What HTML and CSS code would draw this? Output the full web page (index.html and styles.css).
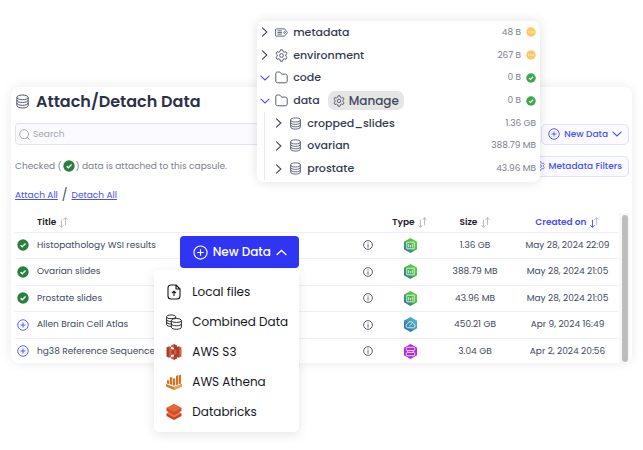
FILE: index.html
```html
<!DOCTYPE html>
<html lang="en">
<head>
    <meta charset="UTF-8">
    <meta name="viewport" content="width=device-width, initial-scale=1.0">
    <link rel="stylesheet" href="styles.css">
    <title>Attach/Detach Data</title>
</head>
<body>
    <!-- Shared icons -->
    <svg class="sprite" aria-hidden="true">
        <defs>
            <linearGradient id="green" x1="1" y1="0" x2="0" y2="1">
                <stop offset="0.3" stop-color="#5cc83c"/>
                <stop offset="1" stop-color="#2566a8"/>
            </linearGradient>
            <linearGradient id="blue" x1="1" y1="0" x2="0" y2="1">
                <stop offset="0" stop-color="#5cc6cc"/>
                <stop offset="1" stop-color="#25639e"/>
            </linearGradient>
        </defs>
        <symbol id="database" viewBox="0 0 16 16">
            <g fill="none" stroke="currentColor" stroke-width="1">
                <ellipse cx="8" cy="3.600" rx="6" ry="2.500"/>
                <path d="M2 3.600v8.800c0 1.400 2.700 2.500 6 2.500s6-1.100 6-2.500V3.600M2 6.600c0 1.400 2.700 2.500 6 2.500s6-1.100 6-2.500M2 9.600c0 1.400 2.700 2.500 6 2.500s6-1.100 6-2.500"/>
            </g>
        </symbol>
        <symbol id="check" viewBox="0 0 16 16">
            <circle cx="8" cy="8" r="7.600" fill="currentColor"/>
            <path d="M4.800 8.200l2.300 2.200 4.300-4.400" fill="none" stroke="#fff" stroke-width="1.800"/>
        </symbol>
        <symbol id="plus" viewBox="0 0 16 16">
            <g fill="none" stroke="currentColor" stroke-width="1.200">
                <circle cx="8" cy="8" r="7"/>
                <path d="M8 4.500v7M4.500 8h7"/>
            </g>
        </symbol>
        <symbol id="info" viewBox="0 0 16 16">
            <g fill="none" stroke="currentColor" stroke-width="1.400">
                <circle cx="8" cy="8" r="7"/>
                <path d="M8 7v5M8 4v1.600"/>
            </g>
        </symbol>
        <symbol id="pending" viewBox="0 0 16 16">
            <circle cx="8" cy="8" r="7.600" fill="#fbc965"/>
            <g fill="#fff"><circle cx="4.500" cy="8" r="1.100"/><circle cx="8" cy="8" r="1.100"/><circle cx="11.500" cy="8" r="1.100"/></g>
        </symbol>
        <symbol id="down" viewBox="0 0 16 16">
            <path d="M1.500 5l6.500 6 6.500-6" fill="none" stroke="currentColor" stroke-width="1.800" stroke-linecap="round"/>
        </symbol>
        <symbol id="up" viewBox="0 0 16 16">
            <path d="M1.500 11L8 5l6.500 6" fill="none" stroke="currentColor" stroke-width="1.800" stroke-linecap="round"/>
        </symbol>
        <symbol id="right" viewBox="0 0 16 16">
            <path d="M4 1.500L11 8l-7 6.500" fill="none" stroke="currentColor" stroke-width="1.800" stroke-linecap="round"/>
        </symbol>
        <symbol id="search" viewBox="0 0 16 16">
            <path d="M12 12l3 3M14 7.500a6.500 6.500 0 1 1-13 0a6.500 6.500 0 0 1 13 0z" fill="none" stroke="currentColor" stroke-width="1.400" stroke-linecap="round"/>
        </symbol>
        <symbol id="gear" viewBox="0 0 16 16">
            <g fill="none" stroke="currentColor" stroke-width="1.100" stroke-linejoin="round">
                <path d="M6.700 1h2.600l.5 2.100 1.500.9 2.100-.700 1.400 2.300-1.600 1.500v1.800l1.600 1.500-1.400 2.300-2.100-.700-1.500.9-.5 2.100H6.700l-.5-2.100-1.500-.9-2.100.7-1.400-2.300 1.600-1.500V7.100L1.200 5.600l1.400-2.300 2.100.7 1.500-.9z"/>
                <circle cx="8" cy="8" r="2.300"/>
            </g>
        </symbol>
        <symbol id="folder" viewBox="0 0 16 16">
            <path d="M1 3.200c0-1.200.7-1.900 1.900-1.900h2.500c.6 0 1 .2 1.300.7l1 1.400c.3.400.6.500 1.100.5h4c1.400 0 2.200.8 2.200 2.200v6.200c0 1.400-.8 2.200-2.200 2.200H3.200C1.800 14.500 1 13.700 1 12.300z" fill="none" stroke="currentColor" stroke-width="1.100"/>
        </symbol>
        <symbol id="tag" viewBox="0 0 16 16">
            <g fill="none" stroke="currentColor" stroke-width="1" stroke-linejoin="round">
                <path d="M1.800 3.500h10L15.500 8l-3.700 4.500h-10A1.200 1.200 0 0 1 .6 11.300V4.700a1.200 1.200 0 0 1 1.200-1.200zM3 6h5.500M3 8h5.500M3 10h5.500"/>
                <circle cx="11.800" cy="8" r="1.100"/>
            </g>
        </symbol>
        <symbol id="sort" viewBox="0 0 16 16">
            <g fill="none" stroke="currentColor" stroke-width="1.400">
                <path d="M5 4v11M2 12l3 3 3-3"/>
                <path class="asc" d="M11 12V1M8 4l3-3 3 3"/>
            </g>
        </symbol>
        <symbol id="chart" viewBox="0 0 16 16">
            <path d="M8 0l7 4v8l-7 4-7-4V4z" fill="url(#green)"/>
            <path d="M4 4.500h8v7H4zM6 6.500v3.500M8 7.500v2.500M10 6.500v3.500" fill="none" stroke="#d9f5d6" stroke-width="1"/>
        </symbol>
        <symbol id="cloud" viewBox="0 0 16 16">
            <path d="M8 0l7 4v8l-7 4-7-4V4z" fill="url(#blue)"/>
            <path d="M5 11.500a2.200 2.200 0 0 1-.2-4.300 3.300 3.300 0 0 1 6.300 0 2.200 2.200 0 0 1 0 4.300zM6.500 9.800l3-2.800" fill="none" stroke="#dff4f8"/>
        </symbol>
        <symbol id="server" viewBox="0 0 16 16">
            <path d="M8 0l7 4v8l-7 4-7-4V4z" fill="#ad2fd4"/>
            <g fill="none" stroke="#f4d9fb"><rect x="3.500" y="3.500" width="9" height="3.500" rx="1"/><rect x="3.500" y="9" width="9" height="3.500" rx="1"/><path d="M5 7v2M11 7v2"/></g>
        </symbol>
        <symbol id="upload" viewBox="0 0 16 16">
            <path d="M5 1h5l4 4v7a3 3 0 0 1-3 3H5a3 3 0 0 1-3-3V4a3 3 0 0 1 3-3zM10 1v4h4M8 12V7.500M6 9.200l2-2 2 2" fill="none" stroke="currentColor" stroke-width="1.100" stroke-linejoin="round"/>
        </symbol>
        <symbol id="combined" viewBox="0 0 16 16">
            <g fill="#fff" stroke="currentColor" stroke-width="0.900">
                <path d="M.6 3v8c0 1.100 2 2 4.600 2h4V3z" stroke="none"/>
                <path d="M5.200 12.500C2.500 12.500.6 11.600.6 10.500V3M9.800 3v2M.6 5.500c0 1.100 2 2 4.600 2M.6 8c0 1.100 2 2 4.600 2" fill="none"/>
                <ellipse cx="5.200" cy="2.800" rx="4.600" ry="1.900"/>
                <path d="M5.400 6.500v6.800c0 1.100 2.200 2 5 2s5-.9 5-2V6.500z"/>
                <path d="M5.400 9.800c0 1.100 2.200 2 5 2s5-.9 5-2" fill="none"/>
                <ellipse cx="10.400" cy="6.500" rx="5" ry="2"/>
            </g>
        </symbol>
        <symbol id="s3" viewBox="0 0 16 16">
            <path d="M.5 3.500L3 2.300v11.400L.5 12.500z" fill="#a33f2a"/>
            <path d="M3 2.300l5 1.400v8.600l-5 1.400zM8 0L5 1.500V5l3 .7zM8 10.300l-3 .7v3.500L8 16z" fill="#dc5a3a"/>
            <path d="M8 0l3 1.500V5l-3 .7zM8 10.300l3 .7v3.500L8 16zM8 3.700l5-1.400v11.400l-5-1.400z" fill="#a33f2a"/>
            <path d="M13 2.300l2.500 1.200v9L13 13.700z" fill="#dc5a3a"/>
            <path d="M8 5.500L5.500 6v4l2.500.5z" fill="#a33f2a"/>
            <path d="M8 5.500l2.500.5v4l-2.500.5z" fill="#dc5a3a"/>
        </symbol>
        <symbol id="athena" viewBox="0 0 16 16">
            <path d="M0 10l8 3 8-3v2.500L8 16l-8-3.500z" fill="#d9792b"/>
            <path d="M8 13l8-3v2.500L8 16z" fill="#f1a24c"/>
            <path d="M1 6l2 .5V10L1 9.500zM4 3l2 .5V11l-2-.7zM7 4.500h2.200v7H7zM10 2l2-1v9.500l-2 .7zM13 1.500l2-1v9l-2 .7z" fill="#cf6f2a"/>
            <path d="M3 6.500l.8-.3V10L3 10zM6 3.500l.7-.3V11H6zM12 1l.7.300V10l-.7.500z" fill="#f5b66b"/>
        </symbol>
        <symbol id="bricks" viewBox="0 0 16 16">
            <path d="M.5 9.500L8 5.500l7.500 4V12L8 16 .5 12z" fill="#c9401f"/>
            <path d="M.5 9.500L3 8.200l5 2.800 5-2.800 2.500 1.300L8 13.500z" fill="#ef7145"/>
            <path d="M.5 4L8 0l7.500 4v3L8 11 .5 7z" fill="#d05128"/>
            <path d="M.5 4L8 0l7.500 4L8 8z" fill="#e2683a"/>
        </symbol>
    </svg>

    <div class="stage">
        <main class="panel">
            <h1><svg class="icon-lg"><use href="#database"/></svg>Attach/Detach Data</h1>

            <div class="toolbar">
                <div class="search">
                    <svg class="icon-sm"><use href="#search"/></svg>
                    <input type="text" placeholder="Search" aria-label="Search">
                </div>
                <button class="outline"><svg class="icon-md"><use href="#plus"/></svg>New Data<svg class="icon-xs"><use href="#down"/></svg></button>
            </div>

            <div class="toolbar">
                <p class="hint">Checked (<svg class="icon-md done"><use href="#check"/></svg>) data is attached to this capsule.</p>
                <button class="outline"><svg class="icon-xs"><use href="#gear"/></svg>Metadata Filters</button>
            </div>

            <div class="links"><a href="#">Attach All</a><span>/</span><a href="#">Detach All</a></div>

            <div class="list">
                <table>
                    <colgroup>
                        <col class="col-state"><col><col class="col-info"><col class="col-type"><col class="col-size"><col class="col-date">
                    </colgroup>
                    <thead>
                        <tr>
                            <th></th>
                            <th class="title">Title <svg class="icon-sm"><use href="#sort"/></svg></th>
                            <th></th>
                            <th>Type <svg class="icon-sm"><use href="#sort"/></svg></th>
                            <th>Size <svg class="icon-sm"><use href="#sort"/></svg></th>
                            <th class="sorted">Created on <svg class="icon-sm"><use href="#sort"/></svg></th>
                        </tr>
                    </thead>
                    <tbody>
                        <tr>
                            <td class="state"><svg class="icon-md done"><use href="#check"/></svg></td>
                            <td class="title">Histopathology WSI results</td>
                            <td><svg class="icon-xs"><use href="#info"/></svg></td>
                            <td><svg class="icon-lg"><use href="#chart"/></svg></td>
                            <td>1.36 GB</td>
                            <td>May 28, 2024 22:09</td>
                        </tr>
                        <tr>
                            <td class="state"><svg class="icon-md done"><use href="#check"/></svg></td>
                            <td class="title">Ovarian slides</td>
                            <td><svg class="icon-xs"><use href="#info"/></svg></td>
                            <td><svg class="icon-lg"><use href="#chart"/></svg></td>
                            <td>388.79 MB</td>
                            <td>May 28, 2024 21:05</td>
                        </tr>
                        <tr>
                            <td class="state"><svg class="icon-md done"><use href="#check"/></svg></td>
                            <td class="title">Prostate slides</td>
                            <td><svg class="icon-xs"><use href="#info"/></svg></td>
                            <td><svg class="icon-lg"><use href="#chart"/></svg></td>
                            <td>43.96 MB</td>
                            <td>May 28, 2024 21:05</td>
                        </tr>
                        <tr>
                            <td class="state"><svg class="icon-md add"><use href="#plus"/></svg></td>
                            <td class="title">Allen Brain Cell Atlas</td>
                            <td><svg class="icon-xs"><use href="#info"/></svg></td>
                            <td><svg class="icon-lg"><use href="#cloud"/></svg></td>
                            <td>450.21 GB</td>
                            <td>Apr 9, 2024 16:49</td>
                        </tr>
                        <tr>
                            <td class="state"><svg class="icon-md add"><use href="#plus"/></svg></td>
                            <td class="title">hg38 Reference Sequence</td>
                            <td><svg class="icon-xs"><use href="#info"/></svg></td>
                            <td><svg class="icon-lg"><use href="#server"/></svg></td>
                            <td>3.04 GB</td>
                            <td>Apr 2, 2024 20:56</td>
                        </tr>
                    </tbody>
                </table>
                <div class="scrollbar"><div class="thumb"></div></div>
            </div>
        </main>

        <!-- File tree -->
        <ul class="tree">
            <li><svg class="icon-xs"><use href="#right"/></svg><svg class="icon-tree"><use href="#tag"/></svg><span class="name">metadata</span><span class="size">48 B</span><svg class="icon-xs"><use href="#pending"/></svg></li>
            <li><svg class="icon-xs"><use href="#right"/></svg><svg class="icon-tree"><use href="#gear"/></svg><span class="name">environment</span><span class="size">267 B</span><svg class="icon-xs"><use href="#pending"/></svg></li>
            <li><svg class="icon-xs add"><use href="#down"/></svg><svg class="icon-tree"><use href="#folder"/></svg><span class="name">code</span><span class="size">0 B</span><svg class="icon-xs synced"><use href="#check"/></svg></li>
            <li><svg class="icon-xs add"><use href="#down"/></svg><svg class="icon-tree"><use href="#folder"/></svg><span class="name">data</span><button class="manage"><svg class="icon-md"><use href="#gear"/></svg>Manage</button><span class="size">0 B</span><svg class="icon-xs synced"><use href="#check"/></svg></li>
            <li class="child"><svg class="icon-xs"><use href="#right"/></svg><svg class="icon-tree"><use href="#database"/></svg><span class="name">cropped_slides</span><span class="size">1.36 GB</span></li>
            <li class="child"><svg class="icon-xs"><use href="#right"/></svg><svg class="icon-tree"><use href="#database"/></svg><span class="name">ovarian</span><span class="size">388.79 MB</span></li>
            <li class="child"><svg class="icon-xs"><use href="#right"/></svg><svg class="icon-tree"><use href="#database"/></svg><span class="name">prostate</span><span class="size">43.96 MB</span></li>
        </ul>

        <!-- New data menu -->
        <div class="dropdown">
            <button class="primary"><svg class="icon-lg"><use href="#plus"/></svg>New Data<svg class="icon-sm"><use href="#up"/></svg></button>
            <div class="menu">
                <button><svg class="icon-menu"><use href="#upload"/></svg>Local files</button>
                <button><svg class="icon-menu"><use href="#combined"/></svg>Combined Data</button>
                <button><svg class="icon-menu"><use href="#s3"/></svg>AWS S3</button>
                <button><svg class="icon-menu"><use href="#athena"/></svg>AWS Athena</button>
                <button><svg class="icon-menu"><use href="#bricks"/></svg>Databricks</button>
            </div>
        </div>
    </div>
</body>
</html>
```
FILE: styles.css
```css
* {
    box-sizing: border-box;
}

body {
    margin: 0;
    background-color: #fff;
    color: #414960;
    font-family: Poppins, Inter, sans-serif;
    font-size: 9px;
}

button,
input {
    font: inherit;
    color: inherit;
    border: none;
    background: none;
    padding: 0;
}

button {
    display: flex;
    align-items: center;
    white-space: nowrap;
    cursor: pointer;
}

svg {
    flex: none;
    vertical-align: middle;
}

.sprite {
    position: absolute;
    width: 0;
    height: 0;
}

.icon-xs { width: 10px; height: 10px; }
.icon-sm { width: 11px; height: 11px; }
.icon-md { width: 12px; height: 12px; }
.icon-tree { width: 13px; height: 13px; }
.icon-lg { width: 15px; height: 15px; }
.icon-menu { width: 16px; height: 16px; }

.done { color: #29803b; }
.synced { color: #3ea84c; }
.add { color: #4a50f0; }

.asc {
    opacity: var(--asc, 1);
}

.stage {
    position: relative;
    padding: 87px 11px;
}

/* Main panel */
.panel {
    height: 276px;
    padding: 0 2px 0 4px;
    border-radius: 8px;
    background-color: #fff;
    box-shadow: 0 0 12px rgba(0, 0, 0, 0.09);
    overflow: hidden;
}

h1 {
    display: flex;
    align-items: center;
    gap: 6px;
    height: 28px;
    margin: 0 0 8px;
    color: #2b3248;
    font-size: 16px;
    font-weight: 600;
}

h1 svg {
    color: #414960;
}

.toolbar {
    display: flex;
    align-items: center;
    gap: 8px;
    height: 22px;
    margin: 0 1px 10px 0;
}

.search {
    display: flex;
    flex: 1;
    align-items: center;
    gap: 3px;
    height: 22px;
    padding: 0 3px;
    border: 1px solid #dfe1fd;
    border-radius: 4px;
    background-color: #fafaff;
    color: #aaadb8;
}

.search input {
    flex: 1;
    min-width: 0;
}

.search input::placeholder {
    color: #a3a6b1;
}

.outline {
    gap: 4px;
    height: 21px;
    padding: 0 6px;
    border: 1px solid #dfe1fd;
    border-radius: 5px;
    background-color: #fafaff;
    color: #4a50f0;
    font-weight: 500;
}

.hint {
    display: flex;
    flex: 1;
    align-items: center;
    gap: 1px;
    margin: 0;
    color: #7c808c;
}

.links {
    display: flex;
    align-items: center;
    gap: 4px;
    height: 16px;
}

.links a {
    color: #4a50f0;
}

.links span {
    font-size: 12px;
}

/* Data table */
.list {
    display: flex;
    padding-top: 10px;
}

table {
    flex: 1;
    height: 152px;
    table-layout: fixed;
    border-collapse: collapse;
}

.col-state { width: 22px; }
.col-info { width: 36px; }
.col-type { width: 48px; }
.col-size { width: 82px; }
.col-date { width: 103px; }

th,
td {
    padding: 0;
    border-bottom: 1px solid #eeeefc;
    text-align: center;
    white-space: nowrap;
}

th {
    height: 19px;
    color: #1f222b;
    font-weight: 600;
}

th svg {
    color: #b4b6bd;
}

th.sorted,
th.sorted svg {
    --asc: 0.4;
    color: #4a50f0;
}

th.title,
td.title {
    text-align: left;
}

td.state {
    text-align: left;
    padding-left: 2px;
}

.scrollbar {
    width: 11px;
    padding: 2px 3px 1px;
    background-color: #f8f8f8;
}

.thumb {
    width: 6px;
    height: 147px;
    border-radius: 3px;
    background-color: #bdbdbd;
}

/* File tree */
.tree {
    position: absolute;
    top: 21px;
    left: 40%;
    right: 16%;
    display: flex;
    flex-direction: column;
    height: 161px;
    margin: 0;
    padding: 0 4px 2px 3px;
    border-radius: 7px;
    background-color: #fff;
    box-shadow: 0 0 12px rgba(0, 0, 0, 0.12);
    list-style: none;
}

.tree li {
    display: flex;
    flex: 1;
    align-items: center;
    gap: 5px;
}

.tree .child {
    margin-left: 4px;
    padding-left: 9px;
    border-left: 1px solid #e6e7fd;
}

.name {
    color: #343b52;
    font-size: 11px;
    font-weight: 500;
}

.size {
    margin-left: auto;
    color: #7c808c;
}

.manage {
    gap: 4px;
    height: 19px;
    margin-left: 3px;
    padding: 0 5px;
    border-radius: 7px;
    background-color: #e5e5e5;
    font-size: 12px;
    font-weight: 500;
}

/* New data menu */
.dropdown {
    position: absolute;
    top: 236px;
    left: 24%;
    display: flex;
    flex-direction: column;
    align-items: flex-end;
    gap: 2px;
    width: 145px;
    color: #15171c;
    font-size: 12px;
}

.primary {
    justify-content: center;
    gap: 5px;
    width: 119px;
    height: 32px;
    border-radius: 4px;
    background-color: #2f35f2;
    color: #fff;
    font-weight: 500;
}

.menu {
    display: flex;
    flex-direction: column;
    width: 100%;
    padding: 7px 0 5px;
    border-radius: 5px;
    background-color: #fff;
    box-shadow: 0 3px 12px rgba(0, 0, 0, 0.1);
}

.menu button {
    gap: 10px;
    height: 30px;
    padding-left: 12px;
}
```
